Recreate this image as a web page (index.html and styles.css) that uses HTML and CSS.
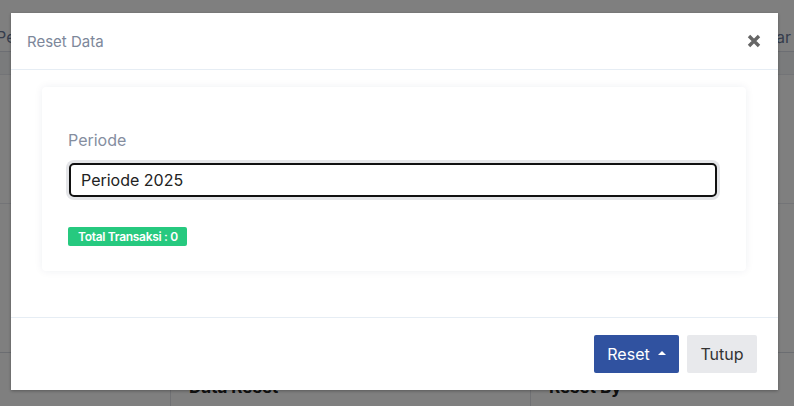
FILE: index.html
```html
<!DOCTYPE html>
<html>
<head>
<meta charset="utf-8">
<link rel="stylesheet" href="styles.css">
</head>
<body>
<div class="page">
  <div class="bg-head">
    <span class="bg-left">Pe</span>
    <span class="bg-right">ar</span>
  </div>
  <div class="bg-row tall"></div>
  <div class="bg-row mid"></div>
  <div class="bg-cols">
    <div class="bg-col c1"><span class="sort">↑↓</span></div>
    <div class="bg-col c2"><span class="bg-title">Data Reset</span><span class="sort">↑↓</span></div>
    <div class="bg-col c3"><span class="bg-title">Reset By</span></div>
  </div>
</div>
<div class="overlay"></div>
<div class="modal">
  <div class="modal-header">
    <span class="modal-title">Reset Data</span>
    <span class="close">
      <svg width="14" height="14" viewBox="0 0 14 14"><path d="M2 2 L12 12 M12 2 L2 12" stroke="#666" stroke-width="3.4" stroke-linecap="butt"/></svg>
    </span>
  </div>
  <div class="modal-body">
    <div class="card">
      <label class="label">Periode</label>
      <div class="input">Periode 2025</div>
      <span class="badge">Total Transaksi : 0</span>
    </div>
  </div>
  <div class="modal-footer">
    <button class="btn btn-primary">Reset <span class="caret"></span></button>
    <button class="btn btn-light">Tutup</button>
  </div>
</div>
</body>
</html>
```
FILE: styles.css
```css
html, body {
  margin: 0;
  padding: 0;
}
body {
  width: 794px;
  height: 406px;
  overflow: hidden;
  font-family: Inter, "Noto Sans", sans-serif;
  background: #fff;
  position: relative;
}
.page {
  display: flex;
  flex-direction: column;
  height: 406px;
}
.bg-head {
  height: 52px;
  display: flex;
  justify-content: space-between;
  align-items: flex-end;
  border-bottom: 1px solid #d8dde6;
  font-size: 16px;
  color: #6b7a99;
  padding: 0 3px 4px 0;
  box-sizing: border-box;
}
.bg-left { margin-left: -4px; }
.bg-row.tall {
  height: 22px;
  background: #f4f6f9;
  border-bottom: 1px solid #e6e9ee;
}
.bg-row.mid {
  height: 128px;
  border-bottom: 1px solid #e6e9ee;
  flex: 0 0 auto;
}
.bg-cols {
  margin-top: 148px;
  border-top: 1px solid #d6dbe3;
  display: flex;
  flex: 1;
}
.bg-col {
  display: flex;
  align-items: flex-start;
  justify-content: space-between;
  padding: 24px 14px 0 18px;
  box-sizing: border-box;
  border-right: 1px solid #e0e3e8;
}
.c1 { width: 171px; justify-content: flex-end; }
.c2 { width: 360px; }
.c3 { flex: 1; border-right: none; }
.sort { font-size: 12px; color: #bbb; letter-spacing: -3px; margin-top: 0; }
.bg-title { font-weight: 700; font-size: 17px; color: #222; }
.overlay {
  position: absolute;
  inset: 0;
  background: rgba(0, 0, 0, 0.5);
}
.modal {
  position: absolute;
  left: 11px;
  top: 13px;
  width: 767px;
  height: 377px;
  background: #fff;
  display: flex;
  flex-direction: column;
  box-shadow: 0 1px 3px rgba(0,0,0,0.3);
}
.modal-header {
  height: 57px;
  box-sizing: border-box;
  border-bottom: 1px solid #e6edf4;
  display: flex;
  align-items: center;
  justify-content: space-between;
  padding: 0 17px 0 16px;
}
.modal-title {
  font-size: 15px;
  color: #7d879a;
  padding-top: 1px;
}
.close {
  display: flex;
  width: 14px;
  height: 14px;
  margin-top: -1px;
}
.modal-body {
  height: 248px;
  box-sizing: border-box;
  padding: 17px 32px 0 31px;
  border-bottom: 1px solid #e6edf4;
}
.card {
  height: 184px;
  box-sizing: border-box;
  background: #fff;
  border-radius: 4px;
  box-shadow: 0 0 8px rgba(30, 40, 80, 0.07);
  padding: 42px 28px 0 26px;
  display: flex;
  flex-direction: column;
  align-items: flex-start;
}
.label {
  font-size: 16px;
  line-height: 22px;
  color: #858e9f;
  margin-bottom: 12px;
}
.input {
  align-self: stretch;
  margin: 0 1px;
  height: 34px;
  box-sizing: border-box;
  border: 2px solid #111;
  border-radius: 5px;
  box-shadow: 0 0 0 3px #e4e5e8;
  font-size: 16px;
  color: #222;
  padding: 0 10px;
  display: flex;
  align-items: center;
}
.badge {
  margin-top: 30px;
  background: #26c97f;
  color: #fff;
  font-size: 12px;
  font-weight: 600;
  height: 19px;
  line-height: 19px;
  padding: 0 9px 0 10px;
  border-radius: 2px;
  letter-spacing: -0.3px;
}
.modal-footer {
  flex: 1;
  display: flex;
  justify-content: flex-end;
  align-items: flex-start;
  padding: 17px 21px 0 0;
  gap: 8px;
}
.btn {
  height: 38px;
  border: none;
  border-radius: 2px;
  font-family: Inter, "Noto Sans", sans-serif;
  font-size: 16px;
  display: flex;
  align-items: center;
  justify-content: center;
  padding: 0;
}
.btn-primary {
  width: 85px;
  background: #3052a0;
  color: #fff;
  gap: 8px;
}
.caret {
  width: 0;
  height: 0;
  border-left: 4px solid transparent;
  border-right: 4px solid transparent;
  border-bottom: 4px solid #fff;
  margin-top: -3px;
}
.btn-light {
  width: 70px;
  background: #e8e9ec;
  color: #333;
}
```
